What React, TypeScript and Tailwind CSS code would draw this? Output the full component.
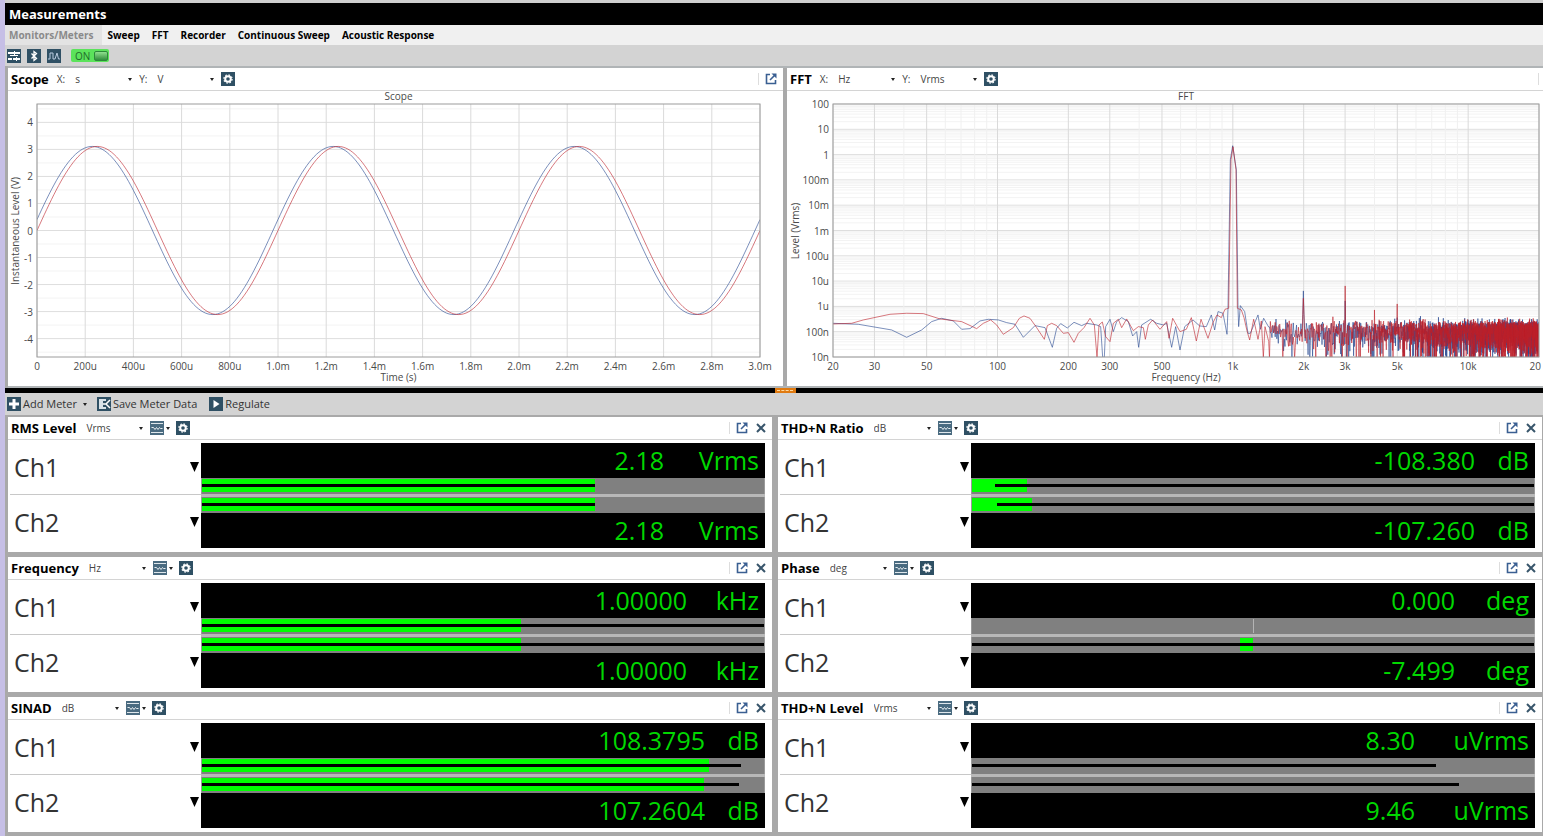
import { ReactNode } from "react";

type Point = [number, number];

type Bar = {
  fill?: [number, number];
  line?: [number, number];
  mark?: number;
};

type Meter = {
  title: string;
  unit: string;
  suffix: string;
  values: [string, string];
  bars: [Bar, Bar];
};

const TABS = ["Sweep", "FFT", "Recorder", "Continuous Sweep", "Acoustic Response"];

const METERS: Meter[] = [
  {
    title: "RMS Level",
    unit: "Vrms",
    suffix: "Vrms",
    values: ["2.18", "2.18"],
    bars: [
      { fill: [0, 70], line: [0, 70] },
      { fill: [0, 70], line: [0, 70] },
    ],
  },
  {
    title: "THD+N Ratio",
    unit: "dB",
    suffix: "dB",
    values: ["-108.380", "-107.260"],
    bars: [
      { fill: [0, 9.8], line: [4.1, 100] },
      { fill: [0, 10.7], line: [4.5, 100] },
    ],
  },
  {
    title: "Frequency",
    unit: "Hz",
    suffix: "kHz",
    values: ["1.00000", "1.00000"],
    bars: [
      { fill: [0, 56.7], line: [0, 100] },
      { fill: [0, 56.7], line: [0, 100] },
    ],
  },
  {
    title: "Phase",
    unit: "deg",
    suffix: "deg",
    values: ["0.000", "-7.499"],
    bars: [{ mark: 50 }, { fill: [47.7, 50], line: [0, 100] }],
  },
  {
    title: "SINAD",
    unit: "dB",
    suffix: "dB",
    values: ["108.3795", "107.2604"],
    bars: [
      { fill: [0, 90.3], line: [0, 95.9] },
      { fill: [0, 89.4], line: [0, 95.5] },
    ],
  },
  {
    title: "THD+N Level",
    unit: "Vrms",
    suffix: "uVrms",
    values: ["8.30", "9.46"],
    bars: [{ line: [0, 82.5] }, { line: [0, 86.6] }],
  },
];

const SUFFIX_WIDTH: Record<string, string> = {
  Vrms: "w-[95px]",
  dB: "w-[54px]",
  kHz: "w-[72px]",
  deg: "w-[74px]",
  uVrms: "w-[114px]",
};

/* ---------- chart data ---------- */

const FFT_W = 2118;
const FFT_H = 758;

function sine(phase: number) {
  const pts: string[] = [];
  for (let i = 0; i <= 300; i++) {
    const v = 3.11 * Math.sin((i / 100) * 2 * Math.PI + phase);
    pts.push(`${(i / 300) * 1000},${500 - (v / 4.68) * 500}`);
  }
  return pts.join(" ");
}

const LOW_BLUE: Point[] = [
  [0, 657], [76, 660], [176, 677], [221, 699], [266, 677], [296, 652], [326, 642], [361, 650],
  [386, 675], [411, 673], [441, 650], [466, 645], [496, 647], [521, 655], [546, 660], [571, 699],
  [606, 664], [636, 670], [658, 729], [671, 672], [683, 658], [703, 671], [723, 654], [746, 664],
  [761, 657], [791, 662], [803, 667], [809, 759], [814, 759], [818, 667], [831, 645], [841, 682],
  [851, 652], [866, 640], [886, 652], [899, 695], [911, 682], [917, 729], [926, 662], [953, 645],
  [971, 657], [991, 662], [1001, 657], [1016, 729], [1028, 667], [1041, 737], [1055, 667],
  [1080, 647], [1100, 665], [1120, 667], [1135, 632], [1145, 677], [1155, 622], [1170, 627],
  [1182, 690], [1185, 612], [1192, 167], [1199, 125], [1210, 197], [1215, 612], [1217, 667],
  [1222, 604], [1235, 622], [1245, 687], [1252, 687], [1275, 632], [1282, 675], [1292, 642],
];

const LOW_RED: Point[] = [
  [0, 659], [56, 657], [91, 647], [171, 630], [221, 627], [271, 628], [321, 644], [386, 652],
  [431, 673], [451, 657], [473, 647], [491, 662], [511, 690], [541, 670], [559, 642], [573, 635],
  [591, 642], [611, 670], [634, 705], [643, 664], [656, 657], [671, 664], [691, 687], [706, 685],
  [723, 714], [736, 687], [753, 670], [771, 642], [784, 662], [792, 759], [798, 662], [808, 653],
  [818, 697], [831, 712], [841, 657], [856, 645], [866, 670], [881, 644], [901, 679], [916, 667],
  [931, 670], [937, 705], [946, 662], [959, 647], [981, 675], [1001, 652], [1008, 702],
  [1019, 642], [1041, 682], [1060, 675], [1075, 640], [1090, 710], [1104, 645], [1125, 702],
  [1140, 655], [1152, 632], [1165, 640], [1176, 615], [1187, 612], [1194, 167], [1200, 128],
  [1209, 197], [1213, 612], [1225, 617], [1233, 640], [1242, 680], [1250, 707], [1262, 645],
  [1275, 705], [1285, 650], [1291, 759], [1296, 667],
];

const toX = (f: number) => (Math.log10(f / 20) / 3) * FFT_W;

// Rayleigh distributed noise floor above 1.4 kHz, plus the harmonics
function spectrum(low: Point[], seed: number, harmonics: Record<number, number>) {
  let s = seed;
  const rand = () => {
    s = (s * 1664525 + 1013904223) % 4294967296;
    return (s + 1) / 4294967297;
  };
  const pts = [...low];
  const step = 11.72;
  for (let f = 1420; f < 20000; f += step) {
    let level = Math.log10(Math.sqrt(-Math.log(rand())));
    if (level < 0) level *= 1.5;
    let y = 673 - level * 80;
    for (const h of Object.keys(harmonics)) {
      const d = Math.abs(f - Number(h));
      if (d < step / 2) y = harmonics[Number(h)];
      else if (d < step * 1.5 && Number(h) < 2500) y = 630;
    }
    pts.push([toX(f), Math.min(y, 762)]);
  }
  return pts.map(([x, y]) => `${x.toFixed(1)},${y.toFixed(1)}`).join(" ");
}

const FFT_BLUE = spectrum(LOW_BLUE, 77, { 2000: 560, 3000: 590, 5000: 640 });
const FFT_RED = spectrum(LOW_RED, 4021, { 2000: 582, 3000: 545, 4000: 617, 5000: 599 });

type Tick = { pos: number; label?: string; faint?: boolean; atEdge?: boolean };

const SCOPE_X: Tick[] = [
  "0", "200u", "400u", "600u", "800u", "1.0m", "1.2m", "1.4m",
  "1.6m", "1.8m", "2.0m", "2.2m", "2.4m", "2.6m", "2.8m", "3.0m",
].map((label, i) => ({ label, pos: (i / 15) * 100 }));

const SCOPE_Y: Tick[] = [];
for (let v = -4.5; v <= 4.5; v += 0.5) {
  const whole = Number.isInteger(v);
  SCOPE_Y.push({ pos: 50 - (v / 4.68) * 50, label: whole ? String(v) : undefined, faint: !whole });
}

const FFT_X_LABELS: Record<number, string> = {
  20: "20", 30: "30", 50: "50", 100: "100", 200: "200", 300: "300", 500: "500",
  1000: "1k", 2000: "2k", 3000: "3k", 5000: "5k", 10000: "10k", 20000: "20",
};
const FFT_X: Tick[] = [];
for (const decade of [10, 100, 1000, 10000]) {
  for (let m = 1; m < 10; m++) {
    const f = decade * m;
    if (f < 20 || f > 20000) continue;
    FFT_X.push({
      pos: (toX(f) / FFT_W) * 100,
      label: FFT_X_LABELS[f],
      faint: !FFT_X_LABELS[f],
      atEdge: f === 20000,
    });
  }
}

const FFT_Y: Tick[] = [];
["100", "10", "1", "100m", "10m", "1m", "100u", "10u", "1u", "100n", "10n"].forEach((label, i) => {
  FFT_Y.push({ pos: i * 10, label });
  if (i < 10) {
    for (let m = 2; m < 10; m++) {
      FFT_Y.push({ pos: i * 10 + (1 - Math.log10(m)) * 10, faint: true });
    }
  }
});

/* ---------- icons ---------- */

function IconBox({ children }: { children: ReactNode }) {
  return (
    <svg viewBox="0 0 14 14" className="size-3.5 shrink-0" aria-hidden="true">
      <rect width="14" height="14" fill="#2f5064" />
      {children}
    </svg>
  );
}

function GearIcon() {
  return (
    <IconBox>
      <circle cx="7" cy="7" r="2.8" fill="none" stroke="#fff" strokeWidth="2" />
      <circle cx="7" cy="7" r="4.1" fill="none" stroke="#fff" strokeWidth="1.2" strokeDasharray="1.61 1.61" />
    </IconBox>
  );
}

function WaveIcon() {
  return (
    <svg viewBox="0 0 14 14" className="size-3.5 shrink-0" aria-hidden="true">
      <rect width="14" height="14" fill="#4a6b80" />
      <path d="M1 2.5h12M1 11.5h12" stroke="#dfe7ec" />
      <path d="M1.5 6.5h2l1.500 2 1.500-2 1.500 2 1.500-2 1 1h2" fill="none" stroke="#e8eef2" />
    </svg>
  );
}

function PopOutIcon() {
  return (
    <svg viewBox="0 0 12 12" className="size-3" fill="none" stroke="#3a5f92" aria-hidden="true">
      <path d="M5 1.5H1.5v9h9V7" strokeWidth="1.6" />
      <path d="M5 7l5-5" strokeWidth="1.6" />
      <path d="M6.5.5h5v5z" fill="#3a5f92" stroke="none" />
    </svg>
  );
}

function CloseIcon() {
  return (
    <svg viewBox="0 0 10 10" className="size-2.5" stroke="#38556b" strokeWidth="2" aria-hidden="true">
      <path d="M1 1l8 8M9 1L1 9" />
    </svg>
  );
}

function Caret() {
  return (
    <svg viewBox="0 0 4 3" className="h-[3px] w-1 shrink-0" aria-hidden="true">
      <path d="M0 0h4L2 3z" fill="#222" />
    </svg>
  );
}

/* ---------- shared bits ---------- */

function UnitSelect({ label, value }: { label: string; value: string }) {
  return (
    <div className="relative flex items-center">
      <select
        aria-label={label}
        className="h-4 w-[60px] appearance-none bg-transparent text-[10px] leading-4 text-[#444] outline-none"
      >
        <option>{value}</option>
      </select>
      <span className="pointer-events-none absolute right-[3px]">
        <Caret />
      </span>
    </div>
  );
}

function PanelHeader({ title, children, closable }: { title: string; children: ReactNode; closable?: boolean }) {
  return (
    <header className="flex h-[23px] items-center border-b border-[#d4d4d4] pl-[3px] pr-1.5">
      <h2 className="text-[13px] leading-5 font-bold whitespace-nowrap text-black">{title}</h2>
      {children}
      <div className="ml-auto flex items-center border-l border-[#ddd] pl-1.5">
        <button type="button" aria-label={`Undock ${title}`}>
          <PopOutIcon />
        </button>
        {closable && (
          <button type="button" aria-label={`Close ${title}`} className="ml-2">
            <CloseIcon />
          </button>
        )}
      </div>
    </header>
  );
}

type PlotProps = {
  title: string;
  xTitle: string;
  yTitle: string;
  yTitleOffset: number;
  xTicks: Tick[];
  yTicks: Tick[];
  viewBox: string;
  blue: string;
  red: string;
};

function Plot({ title, xTitle, yTitle, yTitleOffset, xTicks, yTicks, viewBox, blue, red }: PlotProps) {
  return (
    <svg className="block h-[253px] w-full overflow-visible text-[10px]" fill="#4a4a4a" role="img" aria-label={title}>
      {yTicks.map((t) => (
        <line key={t.pos} x1="0" x2="100%" y1={`${t.pos}%`} y2={`${t.pos}%`} stroke={t.faint ? "#f3f3f3" : "#dedede"} />
      ))}
      {xTicks.map((t) => (
        <line key={t.pos} y1="0" y2="100%" x1={`${t.pos}%`} x2={`${t.pos}%`} stroke={t.faint ? "#f0f0f0" : "#dadada"} />
      ))}
      <svg width="100%" height="100%" viewBox={viewBox} preserveAspectRatio="none" fill="none">
        <polyline points={blue} stroke="#24468f" strokeOpacity="0.6" vectorEffect="non-scaling-stroke" />
        <polyline points={red} stroke="#bc1f2a" strokeOpacity="0.6" vectorEffect="non-scaling-stroke" />
      </svg>
      <rect width="100%" height="100%" fill="none" stroke="#9c9c9c" />

      <text x="50%" y="-4" textAnchor="middle">
        {title}
      </text>
      {xTicks.map(
        (t) =>
          t.label && (
            <text
              key={t.pos}
              x={`${t.pos}%`}
              y="100%"
              dx={t.atEdge ? 2 : 0}
              dy="13"
              textAnchor={t.atEdge ? "end" : "middle"}
            >
              {t.label}
            </text>
          ),
      )}
      {yTicks.map(
        (t) =>
          t.label && (
            <text key={t.pos} x="-4" y={`${t.pos}%`} dy="4" textAnchor="end">
              {t.label}
            </text>
          ),
      )}
      <text x="50%" y="100%" dy="24" textAnchor="middle">
        {xTitle}
      </text>
      <text transform={`translate(${yTitleOffset} 127) rotate(-90)`} textAnchor="middle">
        {yTitle}
      </text>
    </svg>
  );
}

function ChartHeader({ title, x, y }: { title: string; x: string; y: string }) {
  return (
    <PanelHeader title={title}>
      <span className="mr-2.5 ml-2 text-[10px] text-[#444]">X:</span>
      <UnitSelect label={`${title} X unit`} value={x} />
      <span className="mr-2.5 ml-1 text-[10px] text-[#444]">Y:</span>
      <UnitSelect label={`${title} Y unit`} value={y} />
      <button type="button" aria-label={`${title} settings`} className="ml-1">
        <GearIcon />
      </button>
    </PanelHeader>
  );
}

/* ---------- meters ---------- */

function LevelBar({ bar }: { bar: Bar }) {
  return (
    <div className="relative h-4 border-x border-[#9a9a9a] bg-[#808080]">
      {bar.fill && (
        <div
          className="absolute top-px h-[13px] bg-[#00ff00]"
          style={{ left: `${bar.fill[0]}%`, width: `${bar.fill[1] - bar.fill[0]}%` }}
        />
      )}
      {bar.line && (
        <div
          className="absolute top-1.5 h-[3px] bg-black"
          style={{ left: `${bar.line[0]}%`, width: `${bar.line[1] - bar.line[0]}%` }}
        />
      )}
      {bar.mark !== undefined && (
        <div className="absolute inset-y-px w-px bg-[#b4b4b4]" style={{ left: `${bar.mark}%` }} />
      )}
    </div>
  );
}

function Reading({ value, suffix }: { value: string; suffix: string }) {
  return (
    <div className="flex h-[35px] justify-end pr-1.5 text-[25px] leading-[35px] text-[#00d800]">
      <span>{value}</span>
      <span className={`text-right ${SUFFIX_WIDTH[suffix]}`}>{suffix}</span>
    </div>
  );
}

function ChannelButton({ name }: { name: string }) {
  return (
    <button type="button" className="flex flex-1 items-center justify-between pr-0.5 pl-1 text-[25px] leading-8 text-[#333]">
      {name}
      <svg viewBox="0 0 9 10" className="h-2.5 w-[9px]" aria-hidden="true">
        <path d="M0 0h9L4.500 10z" fill="#000" />
      </svg>
    </button>
  );
}

function MeterPanel({ meter }: { meter: Meter }) {
  return (
    <section className="bg-white">
      <PanelHeader title={meter.title} closable>
        <div className="ml-2.5">
          <UnitSelect label={`${meter.title} unit`} value={meter.unit} />
        </div>
        <button type="button" aria-label={`${meter.title} display`} className="ml-1 flex items-center gap-0.5">
          <WaveIcon />
          <Caret />
        </button>
        <button type="button" aria-label={`${meter.title} settings`} className="ml-1.5">
          <GearIcon />
        </button>
      </PanelHeader>
      <div className="flex pr-[7px]">
        <div className="flex w-[193px] shrink-0 flex-col divide-y divide-[#c8c8c8] pb-[3px] pl-0.5">
          <ChannelButton name="Ch1" />
          <ChannelButton name="Ch2" />
        </div>
        <div className="mt-[3px] mb-1 min-w-0 flex-1 bg-black">
          <Reading value={meter.values[0]} suffix={meter.suffix} />
          <LevelBar bar={meter.bars[0]} />
          <div className="h-[3px] bg-[#b8b8b8]" />
          <LevelBar bar={meter.bars[1]} />
          <Reading value={meter.values[1]} suffix={meter.suffix} />
        </div>
      </div>
    </section>
  );
}

/* ---------- page ---------- */

export default function App() {
  return (
    <div className="min-h-screen overflow-hidden bg-[#a9a9a9] font-['Open_Sans','Noto_Sans',sans-serif]">
      <div className="min-h-screen border-l-[5px] border-[#c6bfe6]">
        <div className="border-t-[3px] border-[#cfcfcf] bg-black pl-1">
          <h1 className="text-[13px] leading-[22px] font-bold text-white">Measurements</h1>
        </div>

        <nav className="flex h-5 items-center gap-3 bg-[#f0f0f0] text-[10px] leading-5 font-bold text-black">
          <a href="#monitors" className="-mr-1.5 bg-[#e3e3e3] pr-2 pl-1 text-[#8a8a8a]">
            Monitors/Meters
          </a>
          {TABS.map((tab) => (
            <a key={tab} href={`#${tab.toLowerCase().replace(" ", "-")}`}>
              {tab}
            </a>
          ))}
        </nav>

        <div className="flex h-[21px] items-center gap-1.5 bg-[#d3d3d3] pl-0.5">
          <button type="button" aria-label="Signal path setup">
            <IconBox>
              <path d="M1 4h6M8 4h5M1 10h4M6 10h7" stroke="#fff" strokeWidth="2" />
              <path d="M7.500 2v4M9.500 8v4M3 6.500h8" stroke="#fff" />
            </IconBox>
          </button>
          <button type="button" aria-label="Bluetooth">
            <IconBox>
              <path d="M4.500 4.500l5 5L7 11.500v-9l2.500 2-5 5" fill="none" stroke="#fff" strokeWidth="1.300" />
            </IconBox>
          </button>
          <button type="button" aria-label="Generator">
            <IconBox>
              <path d="M1 10h2V4h3v6h2l2-6 1.500 6H13" fill="none" stroke="#b9cbe0" />
            </IconBox>
          </button>
          <button
            type="button"
            aria-pressed="true"
            className="ml-1 flex h-[13px] w-[38px] items-center justify-between rounded-xs bg-[#5be35b] pr-px pl-1 text-[10px] leading-3 text-[#1f6b2b]"
          >
            ON
            <span className="h-2.5 w-3.5 rounded-xs border border-[#2c8a3a] bg-linear-to-b from-[#8fe08f] to-[#2f8f3d]" />
          </button>
        </div>

        <main className="border-l-[3px] border-[#a9a9a9]">
          <div className="grid grid-cols-[775fr_756fr] gap-1 border-y-2 border-[#b0b4b6] bg-[#a9a9a9]">
            <section className="min-w-0 bg-white">
              <ChartHeader title="Scope" x="s" y="V" />
              <div className="pt-[13px] pr-[23px] pb-[29px] pl-[29px]">
                <Plot
                  title="Scope"
                  xTitle="Time (s)"
                  yTitle="Instantaneous Level (V)"
                  yTitleOffset={-18}
                  xTicks={SCOPE_X}
                  yTicks={SCOPE_Y}
                  viewBox="0 0 1000 1000"
                  blue={sine(0.131)}
                  red={sine(0)}
                />
              </div>
            </section>
            <section className="-mr-5 min-w-0 bg-white">
              <ChartHeader title="FFT" x="Hz" y="Vrms" />
              <div className="pt-[13px] pr-6 pb-[29px] pl-[46px]">
                <Plot
                  title="FFT"
                  xTitle="Frequency (Hz)"
                  yTitle="Level (Vrms)"
                  yTitleOffset={-34}
                  xTicks={FFT_X}
                  yTicks={FFT_Y}
                  viewBox={`0 0 ${FFT_W} ${FFT_H}`}
                  blue={FFT_BLUE}
                  red={FFT_RED}
                />
              </div>
            </section>
          </div>
        </main>

        <div className="flex h-[5px] justify-center bg-black pl-[22px]">
          <div className="flex w-[21px] items-center justify-center bg-[#e07a10]">
            <span className="w-4 border-t border-dashed border-[#ffd9a0]" />
          </div>
        </div>

        <div className="flex h-[22px] items-center bg-[#d3d3d3] pl-0.5 text-[11px] text-[#333]">
          <button type="button" className="flex items-center gap-0.5">
            <IconBox>
              <path d="M7 2v10M2 7h10" stroke="#fff" strokeWidth="3" />
            </IconBox>
            Add Meter
            <span className="ml-1">
              <Caret />
            </span>
          </button>
          <button type="button" className="ml-2.5 flex items-center gap-0.5">
            <IconBox>
              <path d="M2 2h7v2H6v6h3v2H2z" fill="#d8e2e8" />
              <path d="M6 7h3M13 3L9 7l4 4" fill="none" stroke="#fff" strokeWidth="1.500" />
            </IconBox>
            Save Meter Data
          </button>
          <button type="button" className="ml-3 flex items-center gap-0.5">
            <IconBox>
              <path d="M4.500 3l6 4-6 4z" fill="#fff" />
            </IconBox>
            Regulate
          </button>
        </div>

        <div className="grid grid-cols-2 gap-x-1.5 gap-y-[5px] border-t-2 border-r border-l-[3px] border-[#a9a9a9]">
          {METERS.map((meter) => (
            <MeterPanel key={meter.title} meter={meter} />
          ))}
        </div>
      </div>
    </div>
  );
}
